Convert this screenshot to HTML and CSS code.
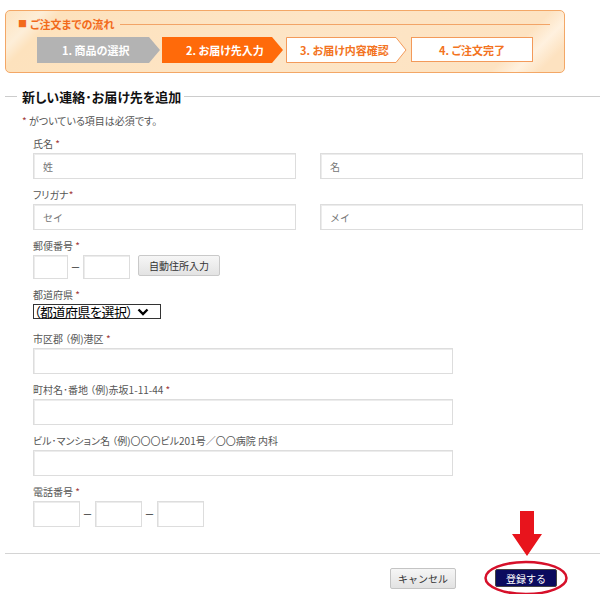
FILE: index.html
```html
<!DOCTYPE html>
<html lang="ja">
<head>
<meta charset="utf-8">
<link rel="stylesheet" href="styles.css">
</head>
<body>
<div class="page">
  <div class="flow">
    <div class="flow-title"><span class="sq">■</span> ご注文までの流れ<span class="flow-line"></span></div>
    <ol class="steps">
      <li class="step step-done">
        <svg class="step-bg" width="123" height="26" viewBox="0 0 123 26"><polygon points="0,0 112,0 123,13 112,26 0,26" fill="#b3b3b3"/></svg>
        <span>1. 商品の選択</span>
      </li>
      <li class="step step-current">
        <svg class="step-bg" width="121" height="26" viewBox="0 0 121 26"><polygon points="0,0 110,0 121,13 110,26 0,26" fill="#ff6a0a"/></svg>
        <span>2. お届け先入力</span>
      </li>
      <li class="step step-next">
        <svg class="step-bg" width="121" height="26" viewBox="0 0 121 26"><polygon points="0.5,0.5 110,0.5 120,13 110,25.5 0.5,25.5" fill="#fff" stroke="#f39a5a"/></svg>
        <span>3. お届け内容確認</span>
      </li>
      <li class="step step-last">
        <span>4. ご注文完了</span>
      </li>
    </ol>
  </div>

  <h2 class="section-title"><span>新しい連絡･お届け先を追加</span></h2>
  <p class="note"><span class="req">*</span> がついている項目は必須です。</p>

  <form class="form">
    <div class="field">
      <label class="label">氏名 <span class="req">*</span></label>
      <div class="row row-name">
        <input class="input input-half" placeholder="姓">
        <input class="input input-half" placeholder="名">
      </div>
    </div>
    <div class="field">
      <label class="label">フリガナ<span class="req">*</span></label>
      <div class="row row-name">
        <input class="input input-half" placeholder="セイ">
        <input class="input input-half" placeholder="メイ">
      </div>
    </div>
    <div class="field">
      <label class="label">郵便番号 <span class="req">*</span></label>
      <div class="row">
        <input class="input zip1">
        <span class="dash">－</span>
        <input class="input zip2">
        <button type="button" class="btn-auto">自動住所入力</button>
      </div>
    </div>
    <div class="field field-select">
      <label class="label">都道府県 <span class="req">*</span></label>
      <div class="row">
        <div class="select">（都道府県を選択）<svg class="chev" width="12" height="8" viewBox="0 0 12 8"><polyline points="1.5,1.5 6,6 10.5,1.5" fill="none" stroke="#000" stroke-width="2.4"/></svg></div>
      </div>
    </div>
    <div class="field">
      <label class="label">市区郡 （例)港区 <span class="req">*</span></label>
      <input class="input input-wide">
    </div>
    <div class="field">
      <label class="label">町村名･番地 （例)赤坂1-11-44 <span class="req">*</span></label>
      <input class="input input-wide">
    </div>
    <div class="field">
      <label class="label">ビル･マンション名 （例)〇〇〇ビル201号／〇〇病院 内科</label>
      <input class="input input-wide">
    </div>
    <div class="field">
      <label class="label">電話番号 <span class="req">*</span></label>
      <div class="row">
        <input class="input tel">
        <span class="dash dash-tel">－</span>
        <input class="input tel">
        <span class="dash dash-tel">－</span>
        <input class="input tel">
      </div>
    </div>
  </form>

  <div class="footer">
    <button type="button" class="btn-cancel">キャンセル</button>
    <div class="submit-wrap">
      <button type="button" class="btn-submit">登録する</button>
      <svg class="arrow" width="32" height="46" viewBox="0 0 32 46"><polygon points="9,0 23,0 23,23 31,23 16,45 1,23 9,23" fill="#e8141c"/></svg>
      <svg class="ellipse" width="84" height="36" viewBox="0 0 84 36"><ellipse cx="42" cy="18" rx="40.5" ry="16" fill="none" stroke="#d6102a" stroke-width="2.5"/></svg>
    </div>
  </div>
</div>
</body>
</html>
```

FILE: styles.css
```css
* { box-sizing: border-box; }
html, body { margin: 0; padding: 0; background: #fff; }
body {
  font-family: "Noto Sans CJK JP", "Noto Sans", sans-serif;
  font-size: 11px;
  color: #555;
  font-feature-settings: "palt";
}
.page { width: 600px; height: 594px; padding-top: 10px; overflow: hidden; }

.flow {
  margin-left: 5px;
  width: 560px;
  height: 63px;
  border: 1px solid #f3a766;
  border-radius: 5px;
  background: linear-gradient(135deg, #fee3bf 0%, #fdeed8 6%, #fde2bd 9%, #fde5c6 50%, #fde3c2 88%, #fff1df 92%, #fde2c0 96%);
  padding: 6px 0 0 12px;
}
.flow-title {
  display: flex;
  align-items: center;
  color: #f26a1b;
  font-weight: bold;
  font-size: 11px;
  height: 14px;
  line-height: 14px;
}
.sq { font-size: 9px; margin-right: 3px; }
.flow-line {
  flex: 1;
  height: 1px;
  background: #f2a467;
  margin: 0 14px 0 6px;
}
.steps {
  list-style: none;
  margin: 6px 0 0 19px;
  padding: 0;
  display: flex;
  gap: 2px;
}
.step {
  position: relative;
  height: 26px;
  display: flex;
  align-items: center;
  font-weight: bold;
  font-size: 11px;
}
.step span { position: relative; }
.step-bg { position: absolute; left: 0; top: 0; }
.step-done { width: 123px; color: #fff; padding-left: 25px; }
.step-current { width: 121px; color: #fff; padding-left: 24px; }
.step-next { width: 121px; color: #f37321; padding-left: 14px; margin-left: 1px; }
.step-last {
  width: 122px;
  height: 25px;
  margin-left: 2px;
  background: #fff;
  border: 1px solid #f39a5a;
  color: #f37321;
  justify-content: center;
}

.section-title {
  margin: 14px 0 0 0;
  height: 18px;
  display: flex;
  align-items: center;
  font-size: 13px;
  font-weight: bold;
  color: #111;
}
.section-title::before {
  content: "";
  width: 12px;
  height: 1px;
  margin-left: 5px;
  margin-right: 5px;
  background: #ccc;
}
.section-title::after {
  content: "";
  flex: 1;
  height: 1px;
  margin-left: 3px;
  background: #ccc;
}
.note {
  margin: 8px 0 0 22px;
  height: 16px;
  line-height: 16px;
  font-size: 10px;
}
.req { color: #a33a3a; }

.form { margin: 7px 0 0 33px; }
.field { margin-bottom: 8px; }
.field-select { margin-bottom: 12px; }
.label {
  display: block;
  height: 17px;
  line-height: 15px;
  font-size: 10px;
}
.row { display: flex; align-items: flex-start; }
.row-name { gap: 24px; }
.input {
  display: block;
  height: 26px;
  border: 1px solid #ddd;
  box-shadow: inset 1px 1px 0 #ececec;
  padding: 0 9px;
  font-family: inherit;
  font-size: 10px;
  color: #555;
  background: #fff;
  outline: none;
}
.input::placeholder { color: #777; }
.input-half { width: 263px; }
.input-wide { width: 420px; }
.zip1 { width: 35px; height: 24px; }
.zip2 { width: 47px; height: 24px; }
.dash {
  width: 15px;
  text-align: center;
  line-height: 24px;
  color: #222;
  font-size: 10px;
}
.dash-tel { width: 15px; line-height: 26px; }
.tel { width: 47px; }
.btn-auto {
  margin-left: 8px;
  width: 82px;
  height: 21px;
  border: 1px solid #c9c9c9;
  border-radius: 2px;
  background: linear-gradient(#f6f6f6, #e3e3e3);
  font-family: inherit;
  font-size: 10px;
  color: #333;
  padding: 0;
}
.select {
  width: 128px;
  height: 15px;
  border: 1px solid #333;
  display: flex;
  align-items: center;
  font-size: 13px;
  line-height: 13px;
  color: #000;
  padding-left: 0;
  letter-spacing: -0.5px;
}
.chev { margin-left: 4px; }

.footer {
  margin-top: 26px;
  border-top: 1px solid #d4d4d4;
  margin-left: 5px;
  height: 41px;
  display: flex;
  align-items: flex-start;
  padding-top: 14px;
}
.btn-cancel {
  margin-left: 385px;
  width: 66px;
  height: 21px;
  border: 1px solid #c4c4c4;
  border-radius: 2px;
  background: linear-gradient(#f6f6f6, #e2e2e2);
  font-family: inherit;
  font-size: 10px;
  color: #333;
  padding: 0;
}
.submit-wrap { position: relative; margin-left: 39px; margin-top: 1px; }
.btn-submit {
  width: 62px;
  height: 18px;
  border: 1px solid #444;
  border-radius: 2px;
  background: #0b0b5e;
  color: #fff;
  font-family: inherit;
  font-size: 10px;
  padding: 0;
  display: block;
}
.arrow { position: absolute; left: 16px; top: -58px; }
.ellipse { position: absolute; left: -11px; top: -9px; }
```
